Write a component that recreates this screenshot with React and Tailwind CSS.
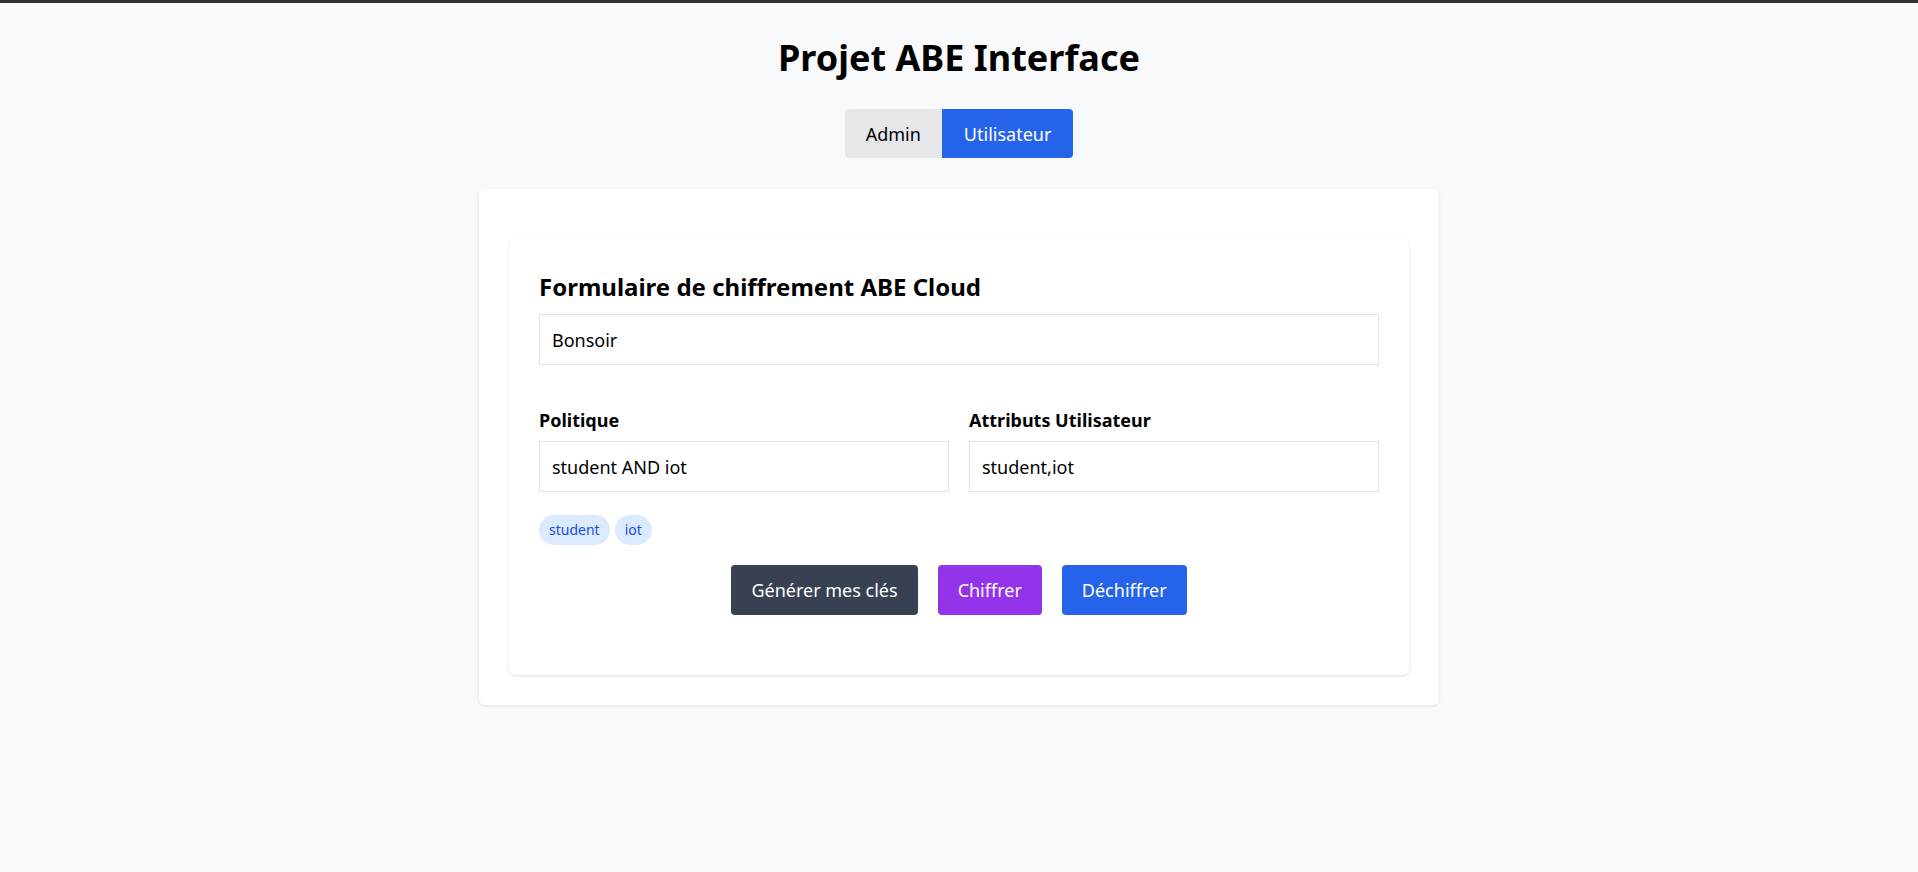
import { useState } from 'react';

export default function App() {
  const [tab, setTab] = useState('user');
  const [message, setMessage] = useState('Bonsoir');
  const [policy, setPolicy] = useState('student AND iot');
  const [attrs, setAttrs] = useState('student,iot');

  const tags = attrs.split(',').map((a) => a.trim()).filter(Boolean);

  return (
    <div className="min-h-screen bg-[#f8f9fa] border-t-[3px] border-[#333333] text-black font-['Noto_Sans',sans-serif]">
      <h1 className="text-center text-[36px] leading-[40px] font-bold pt-[35px]">Projet ABE Interface</h1>

      <div className="flex justify-center mt-[31px]">
        <button
          onClick={() => setTab('admin')}
          className={`h-[49px] px-[21px] text-lg rounded-l ${tab === 'admin' ? 'bg-[#2563eb] text-white' : 'bg-[#e5e7eb] text-black'}`}
        >
          Admin
        </button>
        <button
          onClick={() => setTab('user')}
          className={`h-[49px] px-[22px] text-lg rounded-r ${tab === 'user' ? 'bg-[#2563eb] text-white' : 'bg-[#e5e7eb] text-black'}`}
        >
          Utilisateur
        </button>
      </div>

      <div className="w-[960px] mx-auto mt-[31px] bg-white rounded-md shadow-[0_1px_3px_rgba(0,0,0,0.1)] p-[30px]">
        <div className="mt-5 bg-white rounded-md shadow-[0_1px_3px_rgba(0,0,0,0.12)] px-[30px] pt-[30px] pb-[60px]">
          <h2 className="text-2xl leading-[35px] font-bold">Formulaire de chiffrement ABE Cloud</h2>
          <input
            value={message}
            onChange={(e) => setMessage(e.target.value)}
            className="mt-2.5 w-full h-[51px] px-3 text-lg border border-[#e2e2e2] outline-none"
          />

          <div className="grid grid-cols-2 gap-5 mt-[42px]">
            <div>
              <label className="block text-lg font-bold leading-[27px]">Politique</label>
              <input
                value={policy}
                onChange={(e) => setPolicy(e.target.value)}
                className="mt-[7px] w-full h-[51px] px-3 text-lg border border-[#e2e2e2] outline-none"
              />
            </div>
            <div>
              <label className="block text-lg font-bold leading-[27px]">Attributs Utilisateur</label>
              <input
                value={attrs}
                onChange={(e) => setAttrs(e.target.value)}
                className="mt-[7px] w-full h-[51px] px-3 text-lg border border-[#e2e2e2] outline-none"
              />
            </div>
          </div>

          <div className="flex gap-[5px] mt-[23px]">
            {tags.map((t) => (
              <span key={t} className="h-[30px] px-[10px] flex items-center rounded-full bg-[#dbeafe] text-[#1d4ed8] text-sm">
                {t}
              </span>
            ))}
          </div>

          <div className="flex justify-center gap-5 mt-5">
            <button className="h-[50px] px-5 rounded bg-[#374151] text-white text-lg">Générer mes clés</button>
            <button className="h-[50px] px-5 rounded bg-[#9333ea] text-white text-lg">Chiffrer</button>
            <button className="h-[50px] px-5 rounded bg-[#2563eb] text-white text-lg">Déchiffrer</button>
          </div>
        </div>
      </div>
    </div>
  );
}
